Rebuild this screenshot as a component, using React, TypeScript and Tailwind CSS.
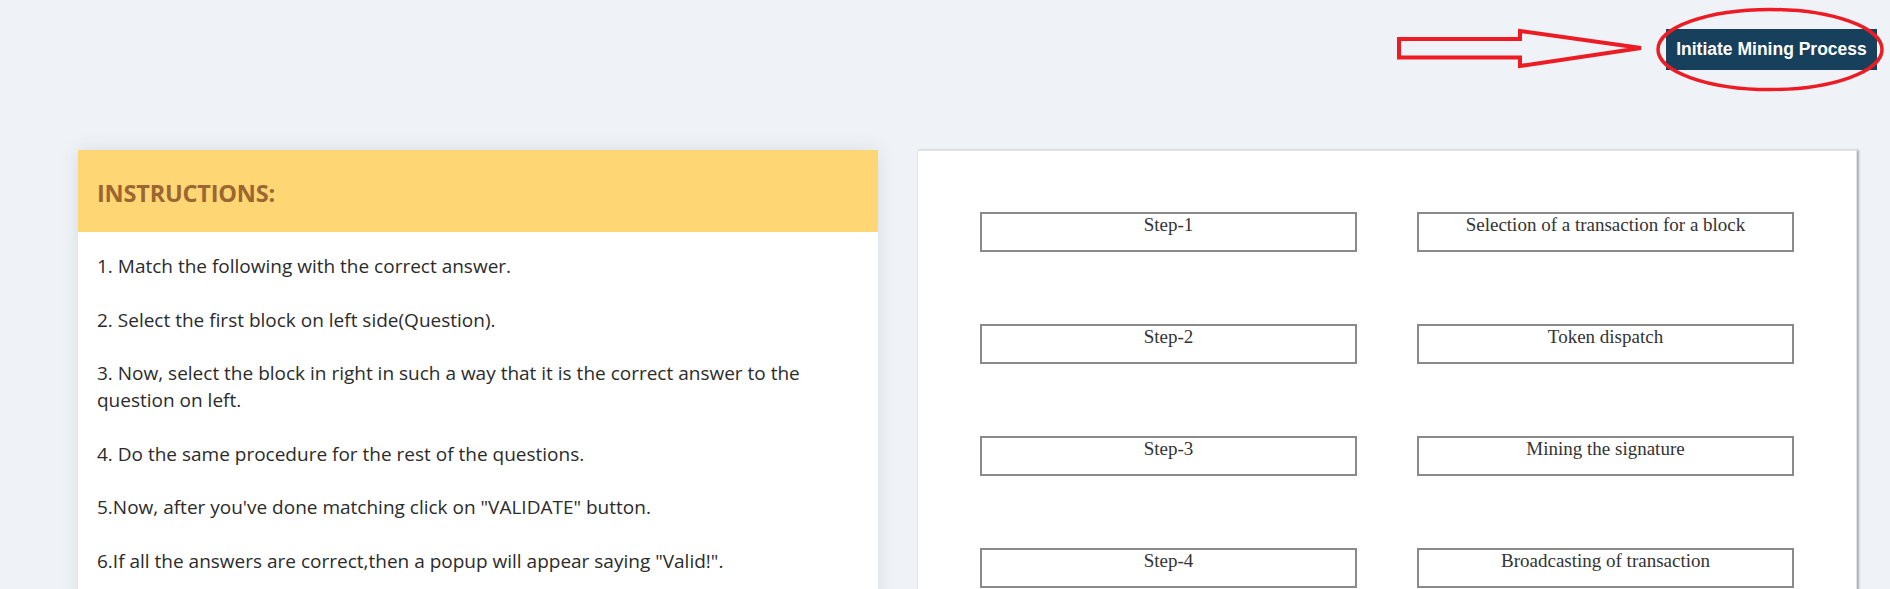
import React from "react";

const steps = ["Step-1", "Step-2", "Step-3", "Step-4"];
const answers = [
  "Selection of a transaction for a block",
  "Token dispatch",
  "Mining the signature",
  "Broadcasting of transaction",
];

const instructions = [
  "1. Match the following with the correct answer.",
  "2. Select the first block on left side(Question).",
  "3. Now, select the block in right in such a way that it is the correct answer to the question on left.",
  "4. Do the same procedure for the rest of the questions.",
  '5.Now, after you\'ve done matching click on "VALIDATE" button.',
  '6.If all the answers are correct,then a popup will appear saying "Valid!".',
];

function MatchBox({ label }: { label: string }) {
  return (
    <div
      className="h-[40px] border-2 border-[#8a8a8a] bg-white text-center text-[19px] leading-[20px] pt-[1px] text-[#333]"
      style={{ fontFamily: '"Liberation Serif", serif' }}
    >
      {label}
    </div>
  );
}

export default function App() {
  return (
    <div className="relative min-h-screen bg-[#eff3f7] overflow-hidden">
      {/* top bar */}
      <div className="flex justify-end pt-[29px] pr-[13px]">
        <button
          className="h-[41px] w-[211px] bg-[#17405d] text-white font-bold text-[17.5px]"
          style={{ fontFamily: '"Liberation Sans", Arial, sans-serif' }}
        >
          Initiate Mining Process
        </button>
      </div>

      {/* hand drawn annotation over the button */}
      <svg
        className="absolute left-0 top-0 pointer-events-none"
        width="1890"
        height="100"
        viewBox="0 0 1890 100"
      >
        <polygon
          points="1399,39 1520,39 1520,31 1641,48 1520,66 1520,57.5 1399,57.5"
          fill="none"
          stroke="#ed1c24"
          strokeWidth="4"
          strokeLinejoin="miter"
        />
        <ellipse cx="1770" cy="49.5" rx="112" ry="40" fill="none" stroke="#ed1c24" strokeWidth="3.5" />
      </svg>

      <div className="flex gap-[39px] pl-[78px] pt-[80px]">
        {/* instructions */}
        <div
          className="w-[800px] bg-white shadow-[0_0_18px_rgba(60,70,90,0.12)]"
          style={{ fontFamily: '"Open Sans", "Noto Sans", sans-serif' }}
        >
          <div className="h-[82px] bg-[#fed673] flex items-center px-[19px] pt-[5px]">
            <h2 className="text-[23.5px] font-bold text-[#9a6632] tracking-[-0.2px]">INSTRUCTIONS:</h2>
          </div>
          <div className="px-[19px] pt-[21px] pb-[30px] text-[19px] leading-[27px] text-[#2b2b2b]">
            {instructions.map((line) => (
              <p key={line} className="mb-[26.5px]">
                {line}
              </p>
            ))}
          </div>
        </div>

        {/* matching blocks */}
        <div className="w-[940px] bg-white border border-[#e0e4e9] shadow-[2px_0_2px_rgba(0,0,0,0.28)] px-[62px] pt-[61px] pb-[60px]">
          <div className="grid grid-cols-2 gap-x-[60px] gap-y-[72px]">
            {steps.map((s, i) => (
              <React.Fragment key={s}>
                <MatchBox label={s} />
                <MatchBox label={answers[i]} />
              </React.Fragment>
            ))}
          </div>
        </div>
      </div>
    </div>
  );
}
